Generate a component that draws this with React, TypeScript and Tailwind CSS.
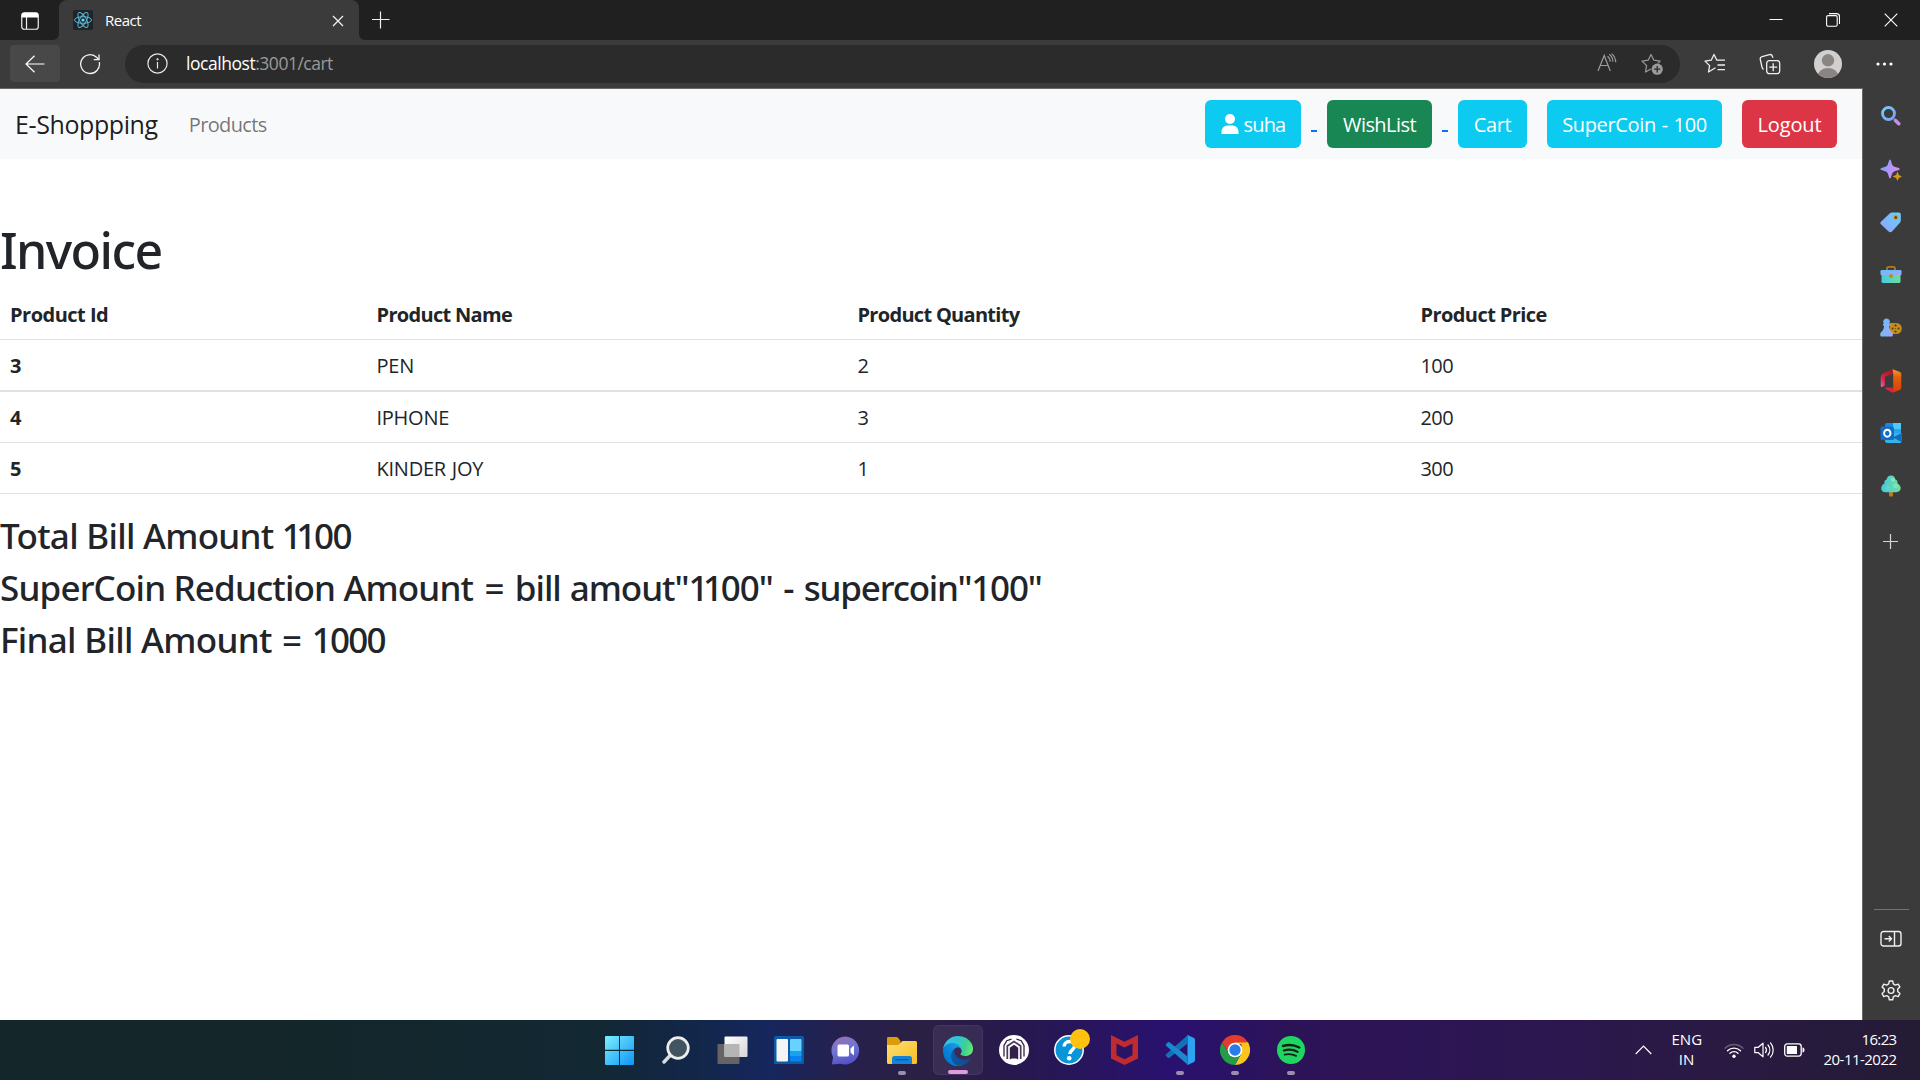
import type { ReactNode } from "react";

const rows = [
  { id: "3", name: "PEN", qty: "2", price: "100" },
  { id: "4", name: "IPHONE", qty: "3", price: "200" },
  { id: "5", name: "KINDER JOY", qty: "1", price: "300" },
];

/* ---------- Browser chrome ---------- */

function ReactLogo() {
  return (
    <svg width="20" height="20" viewBox="0 0 20 20">
      <rect width="20" height="20" rx="2" fill="#20232a" />
      <g fill="none" stroke="#56bfd8" strokeWidth="0.95">
        <ellipse cx="10" cy="10" rx="8.5" ry="3.3" />
        <ellipse cx="10" cy="10" rx="8.5" ry="3.3" transform="rotate(60 10 10)" />
        <ellipse cx="10" cy="10" rx="8.5" ry="3.3" transform="rotate(120 10 10)" />
      </g>
      <circle cx="10" cy="10" r="1.6" fill="#61dafb" />
    </svg>
  );
}

function TabBar() {
  return (
    <div className="flex h-10 shrink-0 items-stretch bg-[#3b3b3b]">
      <div className="flex w-[59px] items-center justify-center rounded-br-md bg-[#202020]">
        <svg width="18" height="18" viewBox="0 0 18 18" fill="none" className="mt-px">
          <rect x="0.75" y="0.75" width="16.5" height="16.5" rx="2.5" stroke="#f2f2f2" strokeWidth="1.2" />
          <path d="M.8 5.4V3A2.2 2.2 0 0 1 3 .8h12A2.2 2.2 0 0 1 17.200 3v2.400z" fill="#fff" />
          <path d="M5.500 5v12" stroke="#f2f2f2" strokeWidth="1.200" />
        </svg>
      </div>
      <div className="w-[300px] bg-[#202020]">
        <div className="flex h-10 items-center rounded-t-lg bg-[#3b3b3b] pl-3.5">
          <ReactLogo />
          <span className="mb-px ml-3 text-[15px] leading-5 tracking-[-0.5px] text-white">React</span>
          <svg width="12" height="12" viewBox="0 0 12 12" className="mt-px mr-[15px] ml-auto" stroke="#f0f0f0" strokeWidth="1.300">
            <path d="M1 1l10 10M11 1L1 11" />
          </svg>
        </div>
      </div>
      <div className="flex flex-1 rounded-bl-md bg-[#202020]">
        <svg width="18" height="18" viewBox="0 0 18 18" className="mt-[11px] ml-[13px]" stroke="#f0f0f0" strokeWidth="1.200">
          <path d="M8.500.5v17M0 8.500h17.500" />
        </svg>
        <div className="ml-auto flex items-center">
          <svg width="14" height="14" viewBox="0 0 14 14" stroke="#fff" strokeWidth="1">
            <path d="M.5 6.500h13" />
          </svg>
          <svg width="14" height="14" viewBox="0 0 14 14" fill="none" stroke="#fff" strokeWidth="1.100" className="ml-[43px]">
            <rect x="0.6" y="2.600" width="10.600" height="10.600" rx="1.500" />
            <path d="M3 .6h7.500a3 3 0 0 1 3 3v7.500" />
          </svg>
          <svg width="14" height="14" viewBox="0 0 14 14" stroke="#fff" strokeWidth="1.100" className="mr-[22px] ml-11">
            <path d="M.7.7l12.600 12.600M13.300.7L.7 13.300" />
          </svg>
        </div>
      </div>
    </div>
  );
}

function Toolbar() {
  return (
    <div className="flex h-12 shrink-0 items-center bg-[#3b3b3b]">
      <div className="mb-px ml-2.5 flex h-[37px] w-[50px] items-center justify-center rounded bg-[#484848]">
        <svg width="20" height="18" viewBox="0 0 20 18" fill="none" stroke="#fff" strokeWidth="1.200">
          <path d="M19.500 9H1M9.500.7L1 9l8.500 8.300" />
        </svg>
      </div>
      <svg width="22" height="22" viewBox="0 0 22 22" fill="none" stroke="#f2f2f2" strokeWidth="1.300" className="mb-px ml-[19px]">
        <path d="M20.300 9.200A9.400 9.400 0 1 1 17.800 4.500L20 6.700" />
        <path d="M20 1.500v5.200h-5.300" />
      </svg>
      <div className="mb-px ml-[24px] flex h-[38px] w-[1555px] items-center rounded-full bg-[#2b2b2b] pl-[22px]">
        <svg width="21" height="21" viewBox="0 0 21 21" fill="none" stroke="#e8e8e8" strokeWidth="1.200">
          <circle cx="10.500" cy="10.500" r="9.600" />
          <path d="M10.500 9v6.500" />
          <circle cx="10.500" cy="6.300" r="0.500" fill="#e8e8e8" />
        </svg>
        <span className="mb-px ml-[18px] text-[17.5px] leading-6 tracking-[-0.45px] text-white">
          localhost<span className="tracking-[-0.5px] text-[#9a9a9a]">:3001/cart</span>
        </span>
        <svg width="20" height="19" viewBox="0 0 20 19" fill="none" stroke="#9b9b9b" strokeWidth="1.200" className="mb-0.5 ml-auto">
          <path d="M1 18L7.200 2.500 13.300 18M3.200 12.500h8" />
          <path d="M10.500 3.200c1.800 1.300 2.700 3.300 2.700 5.600M12.300 1.200c2.300 1.800 3.600 4.400 3.600 7.600M14.600.6c2.500 2 4 5 4.100 8.700" />
        </svg>
        <svg width="22" height="22" viewBox="0 0 22 22" fill="none" stroke="#9b9b9b" strokeWidth="1.200" className="mr-[17px] ml-[24px]">
          <path d="M9.800 15.900L4.500 19l1.100-6.400L1 8.100l6.200-.9L10 1.500l2.900 5.700 6.300.9-2.300 2.300" strokeLinejoin="round" />
          <circle cx="16.200" cy="16.200" r="5.600" fill="#9b9b9b" stroke="none" />
          <path d="M16.200 13v6.400M13 16.200h6.400" stroke="#2b2b2b" strokeWidth="1.300" />
        </svg>
      </div>
      <svg width="22" height="22" viewBox="0 0 22 22" fill="none" stroke="#f0f0f0" strokeWidth="1.300" strokeLinejoin="round" className="ml-[24px]">
        <path d="M11.500 14.800L9.800 15.700 4.500 19l1.100-6.400L1 8.100l6.200-.9L10 1.500l2.900 5.700H21M13.500 12H21M13.500 16.700H21" />
      </svg>
      <svg width="22" height="22" viewBox="0 0 22 22" fill="none" stroke="#f0f0f0" strokeWidth="1.300" className="mb-px ml-[33px]">
        <path d="M4.600 16.400A2.500 2.500 0 0 1 3.100 14.500L1.300 6.600A2.500 2.500 0 0 1 3.100 3.600L10.500 1.600A2.500 2.500 0 0 1 13.400 3.200l.5 1.600" />
        <rect x="7.700" y="7.700" width="13" height="13" rx="2.600" />
        <path d="M14.200 10.200v8M10.200 14.200h8" />
      </svg>
      <svg width="28" height="28" viewBox="0 0 28 28" className="ml-[33px]">
        <defs>
          <clipPath id="avatar">
            <circle cx="14" cy="14" r="14" />
          </clipPath>
        </defs>
        <circle cx="14" cy="14" r="14" fill="#d2d0ce" />
        <g fill="#8a8583" clipPath="url(#avatar)">
          <circle cx="14" cy="10.300" r="6.200" />
          <ellipse cx="14" cy="26.500" rx="10.500" ry="8.500" />
        </g>
      </svg>
      <svg width="17" height="4" viewBox="0 0 17 4" fill="#fff" className="ml-[34px]">
        <circle cx="2" cy="2" r="1.600" />
        <circle cx="8.500" cy="2" r="1.600" />
        <circle cx="15" cy="2" r="1.600" />
      </svg>
    </div>
  );
}

/* ---------- Edge sidebar ---------- */

function SideSlot({ children, className }: { children: ReactNode; className: string }) {
  return <div className={`flex items-center justify-center ${className}`}>{children}</div>;
}

function Sidebar() {
  return (
    <div className="flex w-[57px] shrink-0 flex-col bg-[#3b3b3b] pt-px pr-0.5">
      <svg width="0" height="0">
        <defs>
          <linearGradient id="sBlue" x1="0" y1="0" x2="1" y2="1">
            <stop offset="0" stopColor="#5fc3fa" />
            <stop offset="1" stopColor="#a2a6fb" />
          </linearGradient>
          <linearGradient id="sTag" x1="1" y1="0" x2="0" y2="1">
            <stop offset="0" stopColor="#62d0fb" />
            <stop offset="1" stopColor="#96a2fb" />
          </linearGradient>
          <linearGradient id="sTeal" x1="0" y1="0" x2="1" y2="0">
            <stop offset="0" stopColor="#45cbe0" />
            <stop offset="1" stopColor="#6fdd9c" />
          </linearGradient>
        </defs>
      </svg>
      <SideSlot className="h-[54px]">
        <svg width="22" height="22" viewBox="0 0 22 22" fill="none">
          <circle cx="8.500" cy="8.500" r="6" stroke="url(#sSearch)" strokeWidth="2.800" />
          <path d="M15.500 15.500l3.300 3.200" stroke="#c68cf0" strokeWidth="3.600" strokeLinecap="round" />
          <path d="M12.800 12.800l2 2" stroke="#8c8fa8" strokeWidth="1.600" />
          <defs>
            <linearGradient id="sSearch" x1="0" y1="0" x2="1" y2="1">
              <stop stopColor="#74cbfb" />
              <stop offset="1" stopColor="#7ba2f5" />
            </linearGradient>
          </defs>
        </svg>
      </SideSlot>
      <SideSlot className="h-[53px]">
        <svg width="22" height="22" viewBox="0 0 22 22">
          <defs>
            <linearGradient id="sStar" x1="0" y1="0" x2="1" y2="0.400">
              <stop stopColor="#62b4fb" />
              <stop offset="0.500" stopColor="#a696fa" />
              <stop offset="1" stopColor="#e08cf0" />
            </linearGradient>
          </defs>
          <path d="M10 .5c1 0 1.200 2.800 2.400 5.600.4.800 1 1.200 1.700 1.500 2.800 1.100 5.600 1.400 5.600 2.400s-2.800 1.300-5.600 2.400c-.7.300-1.300.8-1.700 1.700C11.200 16.900 11 19.500 10 19.500s-1.200-2.600-2.400-5.400c-.4-.9-1-1.400-1.700-1.700C3.100 11.300.4 11 .4 10s2.700-1.300 5.500-2.400c.7-.3 1.300-.700 1.700-1.500C8.800 3.300 9 .5 10 .5z" fill="url(#sStar)" />
          <path d="M17.500 12.500l1.400 3.600 3.100 1.400-3.100 1.400-1.400 3.100-1.400-3.100-3.600-1.400 3.600-1.400z" fill="#d19a18" />
        </svg>
      </SideSlot>
      <SideSlot className="h-[52px]">
        <svg width="22" height="22" viewBox="0 0 22 22">
          <path d="M12.300 1.500h6.500a2 2 0 0 1 2 2v6.300a3 3 0 0 1-.9 2L12 20.500a2.500 2.500 0 0 1-3.400 0L1.200 13.600a2.200 2.200 0 0 1 0-3.200l8.500-8a3.500 3.500 0 0 1 2.600-.9z" fill="url(#sTag)" />
          <circle cx="15.800" cy="6.400" r="2.600" fill="#e09a1a" />
          <circle cx="15.800" cy="6.400" r="1.200" fill="#3b2b1b" />
        </svg>
      </SideSlot>
      <SideSlot className="h-[54px]">
        <svg width="22" height="22" viewBox="0 0 22 22">
          <path d="M7 7V4.500C7 3.300 8 2.800 9 2.800h4c1 0 2 .5 2 1.700V7" fill="none" stroke="#b07d15" strokeWidth="1.800" />
          <path d="M1.500 9h19v8.500a1.500 1.500 0 0 1-1.500 1.500H3a1.500 1.500 0 0 1-1.500-1.500z" fill="url(#sTeal)" />
          <rect x="0.500" y="6" width="21" height="5.300" rx="1.200" fill="url(#sBlue)" />
          <circle cx="11" cy="12" r="2" fill="#c48a19" />
        </svg>
      </SideSlot>
      <SideSlot className="h-[52px]">
        <svg width="22" height="22" viewBox="0 0 22 22">
          <path d="M10 6h6.300a5.300 5.300 0 0 1 0 11H9z" fill="#c48d1c" />
          <g fill="#574020">
            <circle cx="15.500" cy="8.400" r="1.100" />
            <circle cx="18.600" cy="11.500" r="1.100" />
            <circle cx="15.500" cy="14.600" r="1.100" />
            <circle cx="12.600" cy="11.500" r="1.100" />
            <circle cx="15.600" cy="11.500" r="0.500" />
          </g>
          <path d="M6.500 1.500a3.300 3.300 0 0 1 2.800 5.200c.8.200 1 .8.800 1.500-.1.500-.6.700-1.100.8.200 2.700.8 4.300 2.800 6 .8.700 1 1.400 1 2.500v1a1 1 0 0 1-1 1H1.300a1 1 0 0 1-1-1v-1c0-1.100.2-1.800 1-2.500 2-1.700 2.600-3.300 2.800-6-.5-.1-1-.3-1.100-.8-.2-.7 0-1.300.8-1.500A3.300 3.300 0 0 1 6.500 1.500z" fill="url(#sBlue)" />
        </svg>
      </SideSlot>
      <SideSlot className="h-[53px]">
        <svg width="22" height="24" viewBox="0 0 22 24">
          <defs>
            <linearGradient id="offR" x1="0" y1="1" x2="1" y2="0">
              <stop stopColor="#e06fb5" />
              <stop offset="0.350" stopColor="#cf2340" />
              <stop offset="1" stopColor="#a81418" />
            </linearGradient>
            <linearGradient id="offO" x1="0" y1="0" x2="0" y2="1">
              <stop stopColor="#f59a2c" />
              <stop offset="0.350" stopColor="#e2600c" />
              <stop offset="1" stopColor="#d53d0a" />
            </linearGradient>
          </defs>
          <path d="M12.500.3L3 4.500C1.500 5.300.8 6.500.8 8v9c0 1 .8 1.300 1.500.9l1.500-.8c.8-.5 1.200-1 1.200-2V8.500c0-.6.3-1 1-1.200L13 5z" fill="url(#offR)" />
          <path d="M12.500.3L19.500 2.800c1.200.5 1.800 1.200 1.800 2.500v13.200c0 1.300-.6 2-1.800 2.500L12.500 23.700l.7-4.200V5z" fill="url(#offO)" />
          <path d="M13.500 18.800v3.500l-1 1.400-6.800-3.600c-1-.5-.8-1.600.3-1.600z" fill="#d9243f" />
        </svg>
      </SideSlot>
      <SideSlot className="h-[52px]">
        <svg width="22" height="22" viewBox="0 0 22 22">
          <path d="M5 3a2 2 0 0 1 2-2h12a2 2 0 0 1 2 2v9H5z" fill="#1d87dc" />
          <rect x="13" y="1" width="8" height="6" fill="#50c8f4" />
          <rect x="13" y="7" width="8" height="6" fill="#2aa5ea" />
          <path d="M5 11h16.500v8.500A1.500 1.500 0 0 1 20 21H7a2 2 0 0 1-2-2z" fill="#36b2ec" />
          <path d="M21.500 11v9L13 15.500z" fill="#136cb6" />
          <rect x="0.500" y="4.500" width="13.500" height="13.500" rx="1.500" fill="#0d6fc9" />
          <ellipse cx="7.300" cy="11.200" rx="3.200" ry="3.500" fill="none" stroke="#fff" strokeWidth="1.900" />
        </svg>
      </SideSlot>
      <SideSlot className="h-[53px]">
        <svg width="22" height="22" viewBox="0 0 22 22">
          <rect x="9" y="15" width="4" height="6.500" rx="1" fill="#bb7a1b" />
          <path d="M11 .5c2.600 0 4 1.500 4.200 3.800 1.900.6 2.700 2.300 2.200 4.200 2 .9 3.300 2.600 3.300 4.600 0 2.500-1.700 4.100-4.300 4.100H5.400C2.900 17.200 1.200 15.600 1.200 13.200c0-2.100 1.300-3.700 3.300-4.700C4 6.500 4.900 4.900 6.800 4.300 7 2 8.500.5 11 .5z" fill="url(#sTeal)" />
          <circle cx="13" cy="4.800" r="2" fill="#a5edc5" opacity="0.600" />
          <circle cx="15.500" cy="10.500" r="2.600" fill="#93e8b0" opacity="0.600" />
          <circle cx="8" cy="13" r="2.500" fill="#70d6d8" opacity="0.500" />
        </svg>
      </SideSlot>
      <SideSlot className="h-[59px]">
        <svg width="16" height="16" viewBox="0 0 16 16" stroke="#d6d6d6" strokeWidth="1.200">
          <path d="M7.500 0v15M0 7.500h15" />
        </svg>
      </SideSlot>
      <div className="mt-auto ml-[11px] h-px w-[35px] bg-[#737373]" />
      <SideSlot className="h-[58px]">
        <svg width="22" height="18" viewBox="0 0 22 18" fill="none" stroke="#f0f0f0" strokeWidth="1.400">
          <rect x="1" y="1.500" width="20" height="14.500" rx="2.500" />
          <path d="M14.500 1.500V16M4.500 8.700h7M8.800 6l2.700 2.700-2.700 2.700" />
        </svg>
      </SideSlot>
      <SideSlot className="mb-[7px] h-[45px]">
        <svg width="22" height="22" viewBox="0 0 22 22" fill="none" stroke="#f0f0f0" strokeWidth="1.400" strokeLinejoin="round">
          <path d="M9.300 1h3.400l.6 2.900 2.100 1.200 2.800-1 1.700 3-2.200 2v2.500l2.200 2-1.700 3-2.800-.9-2.100 1.200-.6 2.900H9.300l-.6-2.900-2.100-1.200-2.800.9-1.700-3 2.200-2V9.100l-2.200-2 1.700-3 2.800 1 2.100-1.200z" />
          <circle cx="11" cy="10.500" r="2.900" />
        </svg>
      </SideSlot>
    </div>
  );
}

/* ---------- Shop page ---------- */

function Navbar() {
  return (
    <div className="flex h-[70px] shrink-0 items-center bg-[#f8f9fa] pl-[15px] text-[20px] leading-[30px]">
      <span className="text-[25px] tracking-[-0.4px] text-black/90">E-Shoppping</span>
      <span className="mt-0.5 ml-[31px] tracking-[-0.62px] text-black/55">Products</span>
      <div className="ml-auto flex items-center text-white">
        <div className="flex h-12 w-24 items-center justify-center rounded-md bg-[#0dcaf0]">
          <svg width="18" height="20" viewBox="0 0 18 20" fill="#fff" className="mr-[5px]">
            <ellipse cx="9" cy="5" rx="5" ry="5" />
            <path d="M.5 20v-2.500A6 6 0 0 1 6.500 11.500h5a6 6 0 0 1 6 6V20z" />
          </svg>
          <span className="pt-0.5 tracking-[-0.85px]">suha</span>
        </div>
        <div className="mt-[14px] ml-[10px] h-0.5 w-[6px] bg-[#0d6efd]" />
        <div className="ml-[10px] flex h-12 w-[105px] items-center justify-center rounded-md bg-[#198754] pt-0.5 tracking-[-0.55px]">WishList</div>
        <div className="mt-[14px] ml-[10px] h-0.5 w-[6px] bg-[#0d6efd]" />
        <div className="ml-[10px] flex h-12 w-[69px] items-center justify-center rounded-md bg-[#0dcaf0] pt-0.5 tracking-[-0.4px]">Cart</div>
        <div className="ml-5 flex h-12 w-[175px] items-center justify-center rounded-md bg-[#0dcaf0] pt-0.5 tracking-[-0.35px] [word-spacing:1px]">SuperCoin - 100</div>
        <div className="mr-[25px] ml-5 flex h-12 w-[95px] items-center justify-center rounded-md bg-[#dc3545] pt-0.5 tracking-[-0.15px]">Logout</div>
      </div>
    </div>
  );
}

function Eleven() {
  return (
    <>
      <span className="tracking-[-5.6px]">1</span>
      <span className="tracking-[-2.2px]">1</span>
    </>
  );
}

function Invoice() {
  return (
    <div className="text-[#212529]">
      <h1 className="pt-[61px] pb-[9px] font-['Noto_Sans',sans-serif] text-[50px] leading-[60px] font-medium tracking-[-1.6px]">Invoice</h1>
      <table className="w-full table-fixed border-separate border-spacing-0 text-[20px] leading-[30px]">
        <colgroup>
          <col className="w-[366.5px]" />
          <col className="w-[481px]" />
          <col className="w-[563px]" />
          <col />
        </colgroup>
        <thead>
          <tr className="text-left *:h-[51px] *:border-b *:border-[#dee2e6] *:px-2.5 *:pt-0.5 *:pb-0 *:font-bold">
            <th className="tracking-[-0.5px]">Product Id</th>
            <th className="tracking-[-0.68px]">Product Name</th>
            <th className="tracking-[-0.7px]">Product Quantity</th>
            <th className="tracking-[-0.58px]">Product Price</th>
          </tr>
        </thead>
        <tbody>
          {rows.map((r, i) => (
            <tr key={r.id} className={i === 0 ? "*:h-[52px] *:border-b-2 *:border-[#dee2e6] *:px-2.5 *:pt-0.5 *:pb-0" : "*:h-[51px] *:border-b *:border-[#dee2e6] *:px-2.5 *:pt-0.5 *:pb-0"}>
              <th className="text-left font-bold">{r.id}</th>
              <td className="tracking-[-0.25px] [word-spacing:1px]">{r.name}</td>
              <td>{r.qty}</td>
              <td className="tracking-[-0.6px]">{r.price}</td>
            </tr>
          ))}
        </tbody>
      </table>
      <div className="mt-[21px] flex flex-col gap-2.5 font-['Noto_Sans',sans-serif] text-[35px] leading-[42px] font-medium">
        <h3 className="tracking-[-0.72px]">
          Total Bill Amount <Eleven />
          <span className="tracking-[-1.6px]">00</span>
        </h3>
        <h3 className="tracking-[-0.84px]">
          SuperCoin Reduction Amount <span className="mx-[3px]">=</span> <span className="tracking-[-1.05px] [word-spacing:1px]">bill amout</span>"<Eleven />
          <span className="tracking-[-1.1px]">00</span>" <span className="mx-0.5">-</span> <span className="tracking-[-1.2px]">supercoin"100"</span>
        </h3>
        <h3 className="tracking-[-0.7px]">
          Final Bill Amount <span className="mx-0.5">=</span> <span className="tracking-[-1.8px]">1000</span>
        </h3>
      </div>
    </div>
  );
}

/* ---------- Windows taskbar ---------- */

function TaskItem({ children, state }: { children: ReactNode; state?: "active" | "running" }) {
  return (
    <div className="flex flex-1 justify-center">
      <div className={state === "active" ? "flex h-[50px] w-[50px] shrink-0 flex-col items-center rounded-md border border-white/5 bg-white/7" : "flex h-[50px] w-[50px] shrink-0 flex-col items-center"}>
        <div className="flex h-[45px] items-center pt-[5px]">{children}</div>
        {state === "active" && <div className="h-1 w-5 shrink-0 rounded-full bg-[#dd9ce2]" />}
        {state === "running" && <div className="mt-px h-1 w-2 shrink-0 rounded-full bg-[#9a8fae]" />}
      </div>
    </div>
  );
}

function EdgeIcon() {
  return (
    <svg width="30" height="30" viewBox="0 0 256 256">
      <defs>
        <linearGradient id="e1" x1="63" y1="177" x2="241" y2="177" gradientUnits="userSpaceOnUse">
          <stop stopColor="#0c59a4" />
          <stop offset="1" stopColor="#114a8b" />
        </linearGradient>
        <linearGradient id="e2" x1="157" y1="100" x2="46" y2="221" gradientUnits="userSpaceOnUse">
          <stop stopColor="#1b9de2" />
          <stop offset="0.160" stopColor="#1595df" />
          <stop offset="0.670" stopColor="#0680d7" />
          <stop offset="1" stopColor="#0078d4" />
        </linearGradient>
        <linearGradient id="e3" x1="10" y1="60" x2="255" y2="130" gradientUnits="userSpaceOnUse">
          <stop stopColor="#35c1f1" />
          <stop offset="0.400" stopColor="#2fc5d8" />
          <stop offset="0.750" stopColor="#3fd08f" />
          <stop offset="1" stopColor="#66eb6e" />
        </linearGradient>
      </defs>
      <g transform="translate(-4.630 -4)">
        <path d="M235.680 195.460a93.730 93.730 0 0 1-10.540 4.710 101.870 101.870 0 0 1-35.900 6.460c-47.320 0-88.540-32.550-88.540-74.320A31.480 31.480 0 0 1 117.130 105c-42.800 1.800-53.800 46.400-53.800 72.530 0 73.880 68.090 81.370 82.760 81.370 7.910 0 19.840-2.300 27-4.560l1.310-.44a128.340 128.340 0 0 0 66.600-52.800 4 4 0 0 0-5.320-5.640z" fill="url(#e1)" />
        <path d="M110.340 246.340A79.200 79.200 0 0 1 87.600 225a80.720 80.720 0 0 1 29.530-120c3.120-1.470 8.450-4.130 15.540-4a32.350 32.350 0 0 1 25.690 13 31.880 31.880 0 0 1 6.360 18.660c0-.21 24.460-79.600-80-79.600-43.900 0-80 41.660-80 78.210a130.150 130.150 0 0 0 12.110 56 128 128 0 0 0 156.380 67.110 75.550 75.550 0 0 1-62.780-8z" fill="url(#e2)" />
        <path d="M156.940 153.780c-.81 1.050-3.300 2.500-3.300 5.660 0 2.610 1.700 5.120 4.720 7.230 14.380 10 41.490 8.680 41.560 8.680a59.560 59.560 0 0 0 30.270-8.350 61.380 61.380 0 0 0 30.430-52.880c.26-22.410-8-37.310-11.340-43.910C228.090 28.760 182.350 4 132.610 4a128 128 0 0 0-128 126.200c.48-36.540 36.800-66.050 80-66.050 3.500 0 23.460.34 42 10.070 16.340 8.580 24.900 18.940 30.850 29.210 6.180 10.670 7.280 24.150 7.280 29.520 0 5.370-2.740 13.330-7.800 20.830z" fill="url(#e3)" />
      </g>
    </svg>
  );
}

function Taskbar() {
  return (
    <div className="flex h-[60px] shrink-0 items-stretch bg-[linear-gradient(90deg,#14262a_0%,#142629_14%,#122833_31%,#13264d_37%,#16265e_40%,#26204c_44%,#2b2044_48%,#27184e_53%,#291170_61%,#2c1358_67%,#2c1750_80%,#291a42_90%,#241b35_100%)] text-white">
      <div className="ml-[591.3px] flex w-[394.8px] items-center">
        <TaskItem>
          <svg width="29" height="29" viewBox="0 0 29 29">
            <defs>
              <linearGradient id="win" x1="0" y1="0" x2="29" y2="29" gradientUnits="userSpaceOnUse">
                <stop stopColor="#7ceffc" />
                <stop offset="1" stopColor="#0c95f5" />
              </linearGradient>
            </defs>
            <path d="M1 0h13v13.800H0V1a1 1 0 0 1 1-1zM15 0h13a1 1 0 0 1 1 1v12.800H15zM0 15h14v14H1a1 1 0 0 1-1-1zM15 15h14v13a1 1 0 0 1-1 1H15z" fill="url(#win)" />
          </svg>
        </TaskItem>
        <TaskItem>
          <svg width="28" height="28" viewBox="0 0 28 28">
            <path d="M9 18.500L2 26" stroke="#dcdcdc" strokeWidth="3.400" strokeLinecap="round" />
            <circle cx="16" cy="12" r="10.300" fill="#41545f" stroke="#eeeeee" strokeWidth="2.700" />
          </svg>
        </TaskItem>
        <TaskItem>
          <svg width="31" height="28" viewBox="0 0 31 28">
            <defs>
              <linearGradient id="tv" x1="0" y1="0" x2="1" y2="1">
                <stop stopColor="#ffffff" />
                <stop offset="1" stopColor="#d6d6d6" />
              </linearGradient>
            </defs>
            <rect x="0.500" y="8" width="22" height="20" rx="1" fill="#666463" />
            <rect x="7.500" y="0.500" width="23" height="20.500" rx="1" fill="url(#tv)" />
            <rect x="7.500" y="8" width="15" height="13" fill="#b5b5b5" />
          </svg>
        </TaskItem>
        <TaskItem>
          <svg width="30" height="28" viewBox="0 0 30 28">
            <rect width="30" height="28" rx="1.500" fill="#0d5ba8" />
            <rect x="2.500" y="3" width="11.500" height="22.500" rx="1" fill="#f4f4f4" />
            <rect x="16" y="3" width="11.500" height="12.500" rx="1" fill="#67d2fd" />
            <path d="M16 15.500h11.500V20H16z" fill="#1ca0f2" />
            <path d="M16 20h11.500v4.500a1 1 0 0 1-1 1H17a1 1 0 0 1-1-1z" fill="#0a84ea" />
          </svg>
        </TaskItem>
        <TaskItem>
          <svg width="29" height="29" viewBox="0 0 29 29">
            <defs>
              <linearGradient id="chat" x1="0.200" y1="0" x2="0.500" y2="1">
                <stop stopColor="#9a6fb5" />
                <stop offset="0.450" stopColor="#6f76cf" />
                <stop offset="1" stopColor="#5450c8" />
              </linearGradient>
            </defs>
            <path d="M14.500.5a14 14 0 1 1-5 27.200L.8 28.500l1.300-7.300A14 14 0 0 1 14.500.5z" fill="url(#chat)" />
            <rect x="6.500" y="8.500" width="11.500" height="12" rx="1.500" fill="#fff" />
            <path d="M19.500 12.500L23 9.500v10l-3.500-3z" fill="#fff" />
          </svg>
        </TaskItem>
        <TaskItem state="running">
          <svg width="30" height="28" viewBox="0 0 30 28">
            <defs>
              <linearGradient id="fold" x1="0" y1="0" x2="1" y2="1">
                <stop stopColor="#ffdf73" />
                <stop offset="1" stopColor="#f8be23" />
              </linearGradient>
            </defs>
            <path d="M0 2.300A1.300 1.300 0 0 1 1.300 1h8.200c.6 0 1 .2 1.400.6L13.500 5v6H0z" fill="#dd9a09" />
            <path d="M0 9h10.500c.6 0 1-.2 1.400-.6l3-3c.3-.3.7-.4 1.100-.4h12.500A1.500 1.500 0 0 1 30 6.500v20a1.500 1.500 0 0 1-1.500 1.500h-27A1.500 1.500 0 0 1 0 26.500z" fill="url(#fold)" />
            <path d="M5 28v-5.500A2.500 2.500 0 0 1 7.500 20h15a2.500 2.500 0 0 1 2.500 2.500V28z" fill="#1283d8" />
            <path d="M8.500 23.700h13" stroke="#0a5aa0" strokeWidth="1.200" />
          </svg>
        </TaskItem>
        <TaskItem state="active">
          <EdgeIcon />
        </TaskItem>
      </div>
      <div className="flex w-[332.5px] items-center">
        <TaskItem>
          <svg width="30" height="30" viewBox="0 0 30 30">
            <circle cx="15" cy="15" r="15" fill="#fff" />
            <path d="M5 21.500V10.500l2.800-4.800 4.700-1.500M25 21.500V10.500l-2.800-4.800-4.700-1.500" fill="none" stroke="#322048" strokeWidth="1.300" />
            <path d="M8.300 24V11L15 6.500l6.700 4.500v13" fill="none" stroke="#4b3a5e" strokeWidth="1.700" />
            <path d="M10.800 24.500V12.700L15 9.800l4.200 2.900v11.800l-2-1h-4.400z" fill="#322048" />
          </svg>
        </TaskItem>
        <TaskItem>
          <div className="relative">
            <svg width="30" height="30" viewBox="0 0 30 30">
              <circle cx="15" cy="15" r="14.200" fill="#0a95d8" stroke="#fff" strokeWidth="1.500" />
              <path d="M10.200 11.500c0-3 2.200-5 5.200-5 3.300 0 5.300 1.800 5.300 4.300 0 4-4.900 4.200-4.900 8.200" fill="none" stroke="#fff" strokeWidth="3.400" />
              <circle cx="15.200" cy="23.300" r="2.300" fill="#fff" />
            </svg>
            <div className="absolute -top-1.5 left-4 h-5 w-5 rounded-full bg-[#ffc20e]" />
          </div>
        </TaskItem>
        <TaskItem>
          <svg width="27" height="30" viewBox="0 0 27 30">
            <path d="M0 0l13.500 6.800L27 0v23.500L13.500 30 0 23.500zM5.500 8.500v11.700l8 4 8-4V8.500l-8 4z" fill="#c02b2f" fillRule="evenodd" />
          </svg>
        </TaskItem>
        <TaskItem state="running">
          <svg width="30" height="30" viewBox="0 0 30 30">
            <path d="M22.300.5v8.200L4.500 22.700a1.300 1.300 0 0 1-1.600 0l-1.800-1.600a1.200 1.200 0 0 1 0-1.800z" fill="#1272b8" />
            <path d="M22.300 29.500v-8.200L4.500 7.300a1.300 1.300 0 0 0-1.600 0L1.100 8.900a1.200 1.200 0 0 0 0 1.800z" fill="#1b87cc" />
            <path d="M21.200.6a1.800 1.800 0 0 1 1.900-.3l5.900 2.800a1.800 1.800 0 0 1 1 1.600v20.600a1.800 1.800 0 0 1-1 1.600l-5.900 2.800a1.800 1.800 0 0 1-1.900-.3c.6.300 1.300-.1 1.300-.9V1.500c0-.8-.7-1.200-1.300-.9z" fill="#2ba3f0" />
          </svg>
        </TaskItem>
        <TaskItem state="running">
          <svg width="30" height="30" viewBox="0 0 30 30">
            <path d="M2 7.500A15 15 0 0 1 28 7.500L15 8.500 9 18.500z" fill="#e33b2e" />
            <path d="M28 7.500A15 15 0 0 1 15 30l6-11.500L21.500 8z" fill="#fcc41c" />
            <path d="M2 7.500A15 15 0 0 0 15 30l6.100-10.800L9 18.600z" fill="#259c47" />
            <path d="M15 7.500h13a15 15 0 0 1 .8 1.700H15z" fill="#fcc41c" />
            <circle cx="15" cy="15" r="7.300" fill="#fff" />
            <circle cx="15" cy="15" r="5.700" fill="#2a7de9" />
          </svg>
        </TaskItem>
        <TaskItem state="running">
          <svg width="28" height="28" viewBox="0 0 28 28">
            <circle cx="14" cy="14" r="14" fill="#1fd760" />
            <g fill="none" stroke="#12201a" strokeLinecap="round">
              <path d="M6 10c5.500-1.600 11.500-1.100 16.300 1.500" strokeWidth="2.400" />
              <path d="M6.800 14.400c4.700-1.300 9.700-.9 13.900 1.400" strokeWidth="2.100" />
              <path d="M7.500 18.600c3.900-1 8-.6 11.600 1.300" strokeWidth="1.800" />
            </g>
          </svg>
        </TaskItem>
      </div>
      <div className="ml-auto flex items-center pr-[23.5px] text-[15px] leading-5">
        <svg width="17" height="10" viewBox="0 0 17 10" fill="none" stroke="#fff" strokeWidth="1.200">
          <path d="M.7 9L8.500 1.200 16.300 9" />
        </svg>
        <div className="mb-0.5 ml-5 w-[30px] text-center">
          <div>ENG</div>
          <div>IN</div>
        </div>
        <svg width="20" height="18" viewBox="0 0 20 18" fill="none" strokeWidth="1.400" strokeLinecap="round" className="mb-px ml-[22px]">
          <path d="M1 7.200a12.700 12.700 0 0 1 18 0" stroke="#6a5b7c" />
          <path d="M3.500 9.800a9.200 9.200 0 0 1 13 0M6 12.300a5.700 5.700 0 0 1 8 0" stroke="#fff" />
          <circle cx="10" cy="15.200" r="1.700" fill="#fff" />
        </svg>
        <svg width="21" height="18" viewBox="0 0 21 18" fill="none" stroke="#fff" strokeWidth="1.200" strokeLinejoin="round" className="ml-[10px]">
          <path d="M.8 6.300h3.500L9 2.200v13.600l-4.700-4.100H.8z" />
          <path d="M11.500 6.300c1.200 1.600 1.200 3.800 0 5.400M14 4c2.400 2.900 2.400 7.100 0 10M16.500 1.800c3.600 4.100 3.600 10.300 0 14.400" strokeLinecap="round" />
        </svg>
        <svg width="21" height="14" viewBox="0 0 21 14" fill="none" className="ml-[9px]">
          <rect x="0.700" y="0.900" width="16.500" height="12.200" rx="2.500" stroke="#fff" strokeWidth="1.300" />
          <rect x="2.800" y="3" width="10.200" height="8" rx="0.500" fill="#fff" />
          <path d="M18.500 4.500c1.500 0 2 1 2 2.500s-.5 2.500-2 2.500z" fill="#fff" />
        </svg>
        <div className="mb-0.5 ml-[19px] text-right">
          <div className="tracking-[-0.65px]">16:23</div>
          <div className="tracking-[-0.53px]">20-11-2022</div>
        </div>
      </div>
    </div>
  );
}

export default function App() {
  return (
    <div className="flex h-[1080px] w-[1920px] flex-col overflow-hidden bg-[#3b3b3b] font-['Open_Sans',sans-serif]">
      <TabBar />
      <Toolbar />
      <div className="flex min-h-0 flex-1">
        <div className="flex w-[1863px] shrink-0 flex-col border-t border-r border-[#686868] bg-white">
          <Navbar />
          <Invoice />
        </div>
        <Sidebar />
      </div>
      <Taskbar />
    </div>
  );
}
